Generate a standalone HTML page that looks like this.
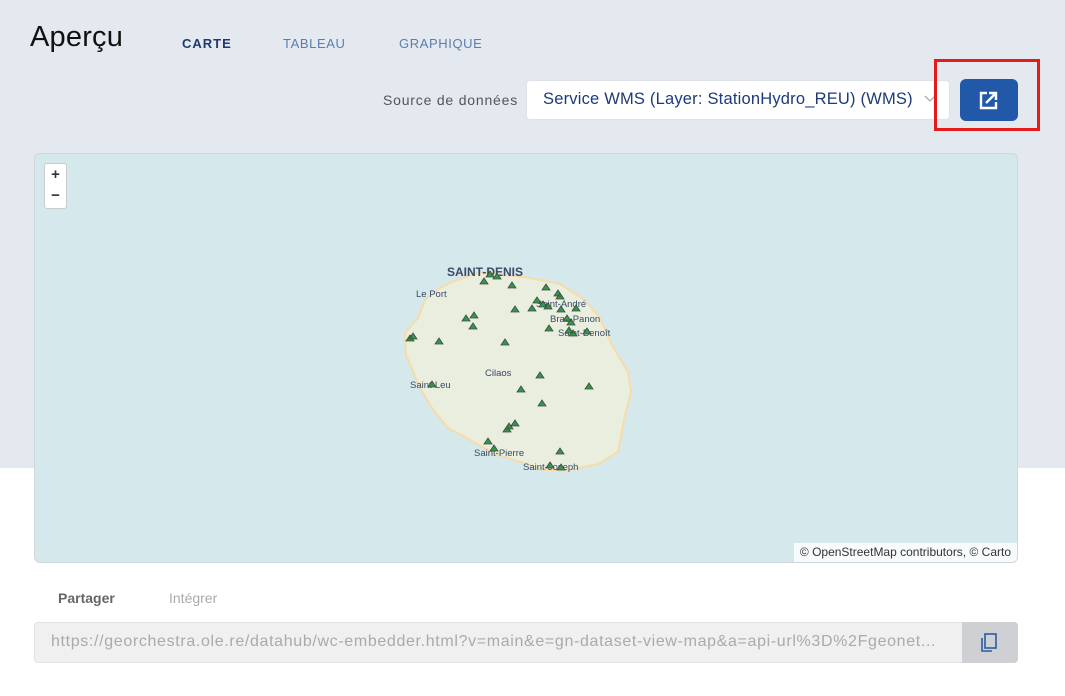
<!DOCTYPE html><html><head><meta charset="utf-8"><style>
body{margin:0;width:1065px;height:696px;position:relative;font-family:"Liberation Sans",sans-serif;background:#fff;overflow:hidden}
.top{position:absolute;left:0;top:0;width:1065px;height:468px;background:#e4e9f0}
.a{position:absolute;white-space:nowrap}
</style></head><body>
<div class="top"></div>
<div class="a" style="left:30px;top:21px;font-size:29px;letter-spacing:.2px;color:#111">Aperçu</div>
<div class="a" style="left:182px;top:36px;font-size:13px;font-weight:bold;letter-spacing:1px;color:#1d3a6e">CARTE</div>
<div class="a" style="left:283px;top:36px;font-size:13px;letter-spacing:.6px;color:#5b7db0">TABLEAU</div>
<div class="a" style="left:399px;top:36px;font-size:13px;letter-spacing:.6px;color:#5b7db0">GRAPHIQUE</div>
<div class="a" style="left:383px;top:92px;font-size:14px;letter-spacing:.8px;color:#555">Source de données</div>
<div class="a" style="left:526px;top:80px;width:424px;height:40px;background:#fff;border:1px solid #dde2e8;border-radius:4px;box-sizing:border-box"></div>
<div class="a" style="left:543px;top:90px;font-size:16.5px;letter-spacing:.2px;color:#1d3a7a">Service WMS (Layer: StationHydro_REU) (WMS)</div>
<svg class="a" style="left:924px;top:95px" width="12" height="8"><path d="M1 1l5 5 5-5" fill="none" stroke="#aab" stroke-width="1.3"/></svg>
<div class="a" style="left:960px;top:79px;width:58px;height:42px;background:#2158a8;border-radius:6px"></div>
<svg class="a" style="left:978px;top:90px" width="21" height="21" viewBox="0 0 21 21"><path d="M9 3H3v15h15v-6" fill="none" stroke="#fff" stroke-width="2.4"/><path d="M8 13L17 4M11 3h7v7" fill="none" stroke="#fff" stroke-width="2.4"/></svg>
<div class="a" style="left:934px;top:59px;width:106px;height:72px;border:3px solid #e31b1b;box-sizing:border-box"></div>
<div class="a" style="left:34px;top:153px;width:984px;height:410px;background:#d5e8eb;border:1px solid #cfd7de;border-radius:6px;box-sizing:border-box;overflow:hidden">
<svg width="984" height="410" style="position:absolute;left:0;top:0" viewBox="35 154 984 410">
<path d="M452 282 L480 272 L530 278 L560 284 L585 300 L600 318 L612 345 L628 372 L631 392 L624 420 L618 452 L598 464 L570 470 L545 470 L520 462 L495 454 L470 440 L448 428 L432 408 L420 388 L406 355 L405 333 L418 318 L425 300 L440 288 Z" fill="#e9eedf" stroke="#f6dca8" stroke-width="2"/>
<g font-family="Liberation Sans,sans-serif" fill="#3a4a66" font-size="9.5">
<text x="447" y="276" font-size="12" font-weight="bold">SAINT-DENIS</text>
<text x="416" y="297">Le Port</text><text x="536" y="307">Saint-André</text><text x="550" y="322">Bras-Panon</text>
<text x="558" y="336">Saint-Benoît</text><text x="485" y="376">Cilaos</text><text x="410" y="388">Saint-Leu</text>
<text x="474" y="456">Saint-Pierre</text><text x="523" y="470">Saint-Joseph</text></g>
</svg>
<div class="a" style="left:9px;top:9px;width:21px;height:44px;background:#fff;border:1px solid #ccc;border-radius:3px;font-size:15px;text-align:center;line-height:21px;color:#333;font-weight:bold">+<br>−</div>
<div class="a" style="right:0;bottom:0;background:rgba(255,255,255,.8);font-size:12px;color:#333;padding:2px 6px 3px">© OpenStreetMap contributors, © Carto</div>
</div>
<div class="a" style="left:58px;top:590px;font-size:14px;font-weight:bold;color:#666">Partager</div>
<div class="a" style="left:169px;top:590px;font-size:14px;color:#aaa">Intégrer</div>
<div class="a" style="left:34px;top:622px;width:984px;height:41px;background:#f0f0f0;border:1px solid #e2e2e2;border-radius:4px;box-sizing:border-box"></div>
<div class="a" style="left:51px;top:633px;font-size:16px;letter-spacing:.65px;color:#aaa">https://georchestra.ole.re/datahub/wc-embedder.html?v=main&amp;e=gn-dataset-view-map&amp;a=api-url%3D%2Fgeonet...</div>
<div class="a" style="left:962px;top:622px;width:56px;height:41px;background:#cfd0d4;border-radius:0 4px 4px 0"></div>
<svg class="a" style="left:980px;top:633px" width="18" height="20"><rect x="5" y="1" width="11" height="14" fill="none" stroke="#2d5aa0" stroke-width="1.6"/><path d="M2 5v13h10" fill="none" stroke="#2d5aa0" stroke-width="1.6"/></svg>
<svg class="a" style="left:0;top:0" width="1065" height="696">
<g fill="#2e9a48" stroke="#454545" stroke-width=".8">
<path d="M484 278l4 6h-8z M490 271l4 6h-8z M497 273l4 6h-8z M512 282l4 6h-8z M546 284l4 6h-8z M558 290l4 6h-8z M560 293l4 6h-8z M537 297l4 6h-8z M543 301l4 6h-8z M532 305l4 6h-8z M515 306l4 6h-8z M548 303l4 6h-8z M561 306l4 6h-8z M576 305l4 6h-8z M466 315l4 6h-8z M474 312l4 6h-8z M473 323l4 6h-8z M567 315l4 6h-8z M571 319l4 6h-8z M569 327l4 6h-8z M573 330l4 6h-8z M587 328l4 6h-8z M549 325l4 6h-8z M505 339l4 6h-8z M410 335l4 6h-8z M413 333l4 6h-8z M439 338l4 6h-8z M432 381l4 6h-8z M540 372l4 6h-8z M521 386l4 6h-8z M589 383l4 6h-8z M542 400l4 6h-8z M515 420l4 6h-8z M509 423l4 6h-8z M507 426l4 6h-8z M488 438l4 6h-8z M494 445l4 6h-8z M560 448l4 6h-8z M550 462l4 6h-8z M561 464l4 6h-8z"/></g></svg>
</body></html>
